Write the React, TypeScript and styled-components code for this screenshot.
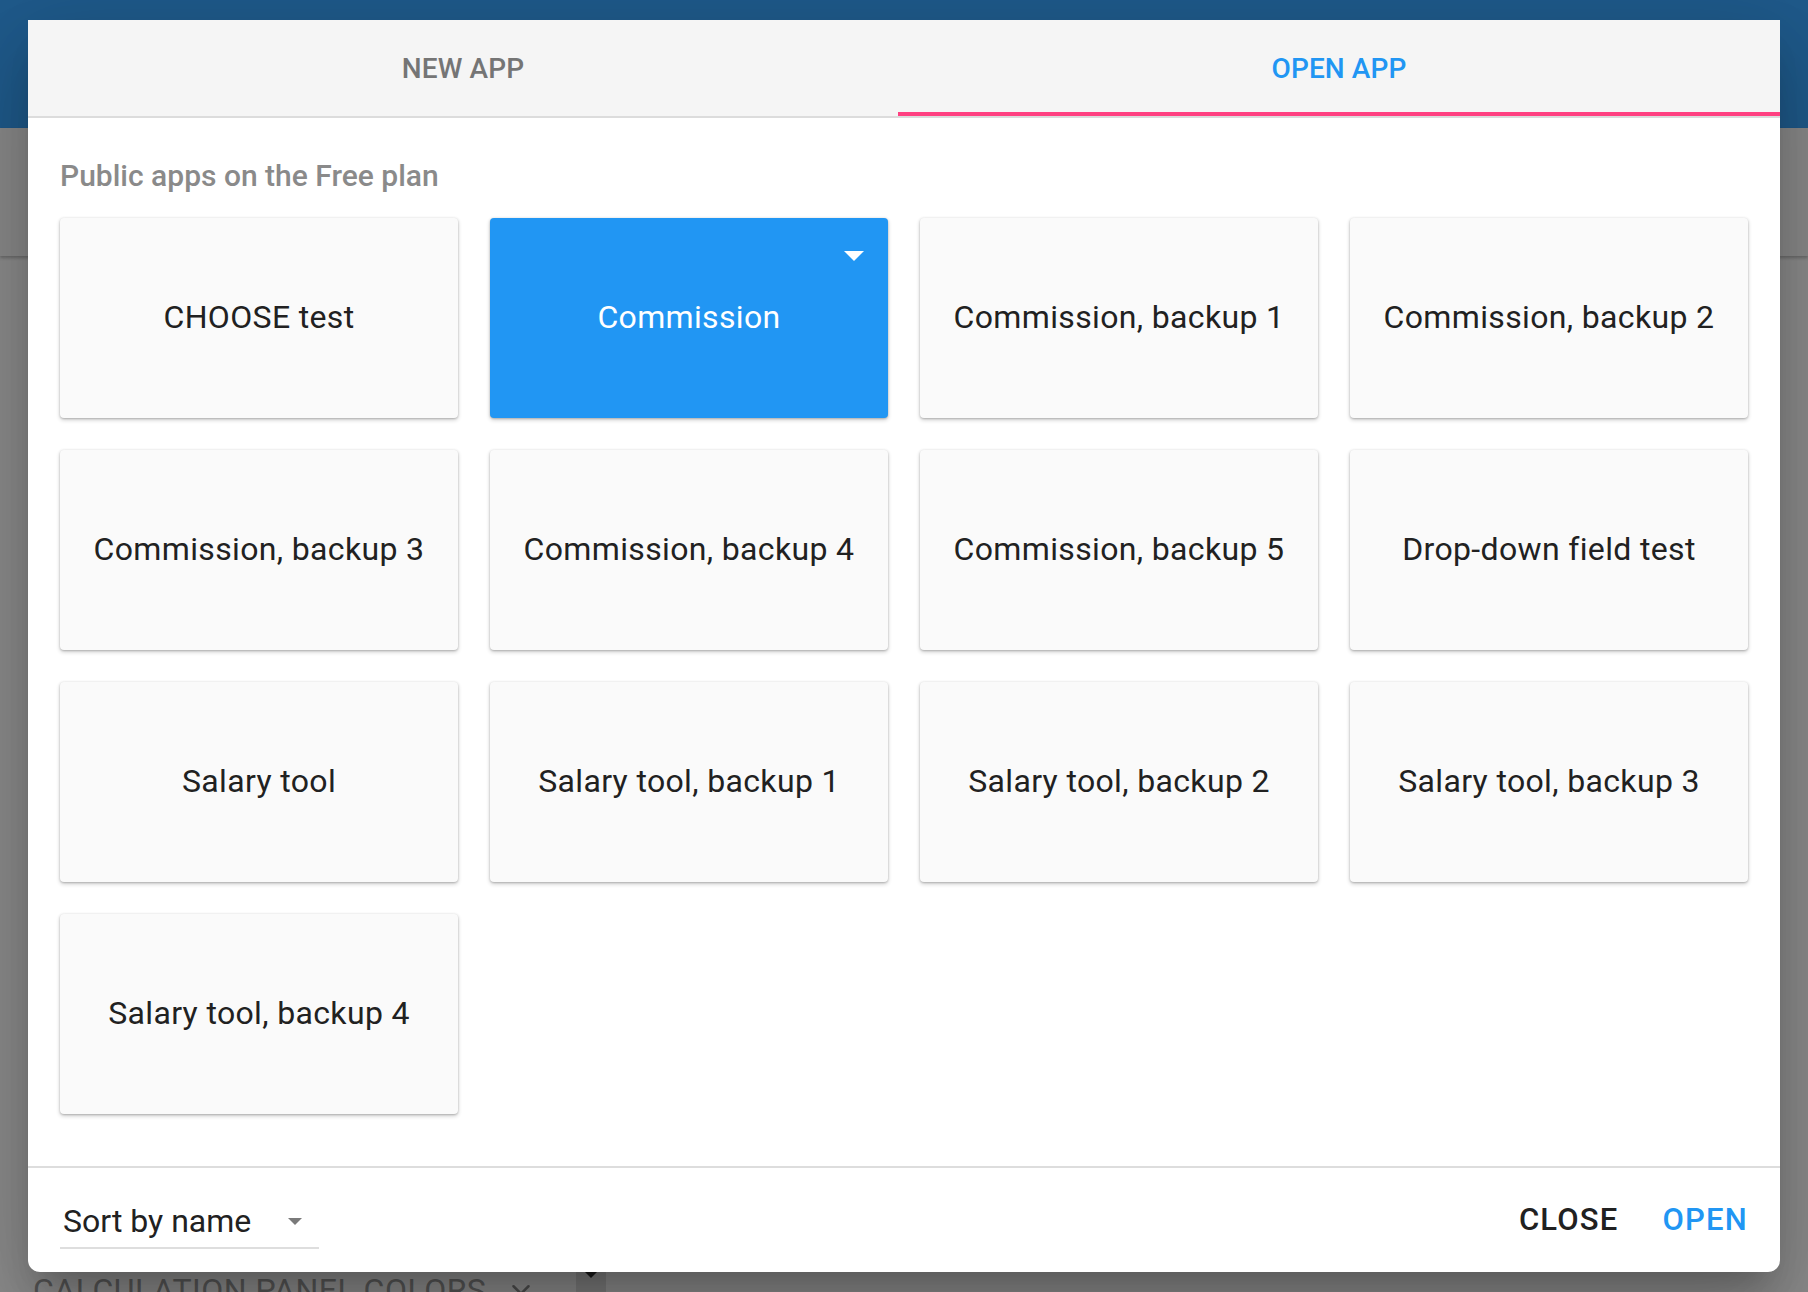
import React from 'react';
import styled, { createGlobalStyle } from 'styled-components';
import { ChevronDown } from 'lucide-react';

const GlobalStyle = createGlobalStyle`
  html, body {
    margin: 0;
    padding: 0;
  }

  body {
    font-family: Roboto, 'Noto Sans', 'Liberation Sans', sans-serif;
    overflow: hidden;
  }

  * {
    box-sizing: border-box;
  }
`;

const Page = styled.div`
  position: relative;
  width: 1808px;
  height: 1292px;
  overflow: hidden;
  display: flex;
  flex-direction: column;
  background: #8c8c8c;
`;

const AppBar = styled.div`
  height: 128px;
  flex: 0 0 128px;
  background: #1f5a8b;
`;

const SubBar = styled.div`
  height: 128px;
  flex: 0 0 128px;
  background: #8a8a8a;
  box-shadow: 0 2px 3px rgba(0, 0, 0, 0.25);
  position: relative;
  z-index: 1;
`;

const PageBody = styled.div`
  flex: 1;
  display: flex;
  align-items: flex-end;
  padding: 0 0 0 33px;
`;

const PanelTitle = styled.div`
  display: flex;
  align-items: center;
  height: 36px;
  margin-bottom: -16px;
  font-size: 32px;
  font-weight: 400;
  letter-spacing: 0.5px;
  color: #575757;
  line-height: 36px;

  svg {
    margin-left: 20px;
    color: #4e4e4e;
  }
`;

const SplitHandle = styled.div`
  align-self: stretch;
  width: 30px;
  margin-left: 40px;
  background: #7c7c7c;
  position: relative;
  margin-top: 800px;

  &::after {
    content: '';
    position: absolute;
    left: 8px;
    bottom: 14px;
    border-left: 7px solid transparent;
    border-right: 7px solid transparent;
    border-top: 7px solid #1b1b1b;
  }
`;

const Backdrop = styled.div`
  position: absolute;
  inset: 0;
  z-index: 10;
  display: flex;
  align-items: center;
  justify-content: center;
`;

const Dialog = styled.div`
  width: 1752px;
  height: 1252px;
  background: #fff;
  border-radius: 0 0 12px 12px;
  display: flex;
  flex-direction: column;
  box-shadow: 0 22px 30px -14px rgba(0, 0, 0, 0.2), 0 48px 76px 6px rgba(0, 0, 0, 0.14),
    0 18px 92px 16px rgba(0, 0, 0, 0.12);
`;

const TabBar = styled.div`
  display: flex;
  height: 98px;
  flex: 0 0 98px;
  background: #f5f5f5;
  border-bottom: 2px solid #dcdcdc;
`;

const Tab = styled.div<{ $active?: boolean; $width?: number }>`
  flex: ${(p) => (p.$width ? `0 0 ${p.$width}px` : '1')};
  display: flex;
  align-items: center;
  justify-content: center;
  font-size: 28px;
  font-weight: 500;
  letter-spacing: 0.1px;
  padding-top: 4px;
  color: ${(p) => (p.$active ? '#2196f3' : '#757575')};
  border-bottom: 4px solid ${(p) => (p.$active ? '#ff4081' : 'transparent')};
`;

const Content = styled.div`
  flex: 1;
  padding: 42px 32px 0;
`;

const SectionTitle = styled.div`
  font-size: 30px;
  line-height: 32px;
  font-weight: 500;
  color: #8a8a8a;
  margin: 0 0 26px 0;
`;

const Grid = styled.div`
  display: grid;
  grid-template-columns: repeat(4, 398px);
  grid-auto-rows: 200px;
  gap: 32px;
`;

const AppCard = styled.div<{ $selected?: boolean }>`
  position: relative;
  display: flex;
  align-items: center;
  justify-content: center;
  padding-bottom: 2px;
  border-radius: 4px;
  font-size: 32px;
  letter-spacing: 0.35px;
  background: ${(p) => (p.$selected ? '#2196f3' : '#fafafa')};
  color: ${(p) => (p.$selected ? '#ffffff' : '#212121')};
  box-shadow: 0 2px 4px rgba(0, 0, 0, 0.2), 0 1px 2px rgba(0, 0, 0, 0.14), 0 0 3px rgba(0, 0, 0, 0.08);
`;

const CardMenu = styled.span`
  position: absolute;
  top: 33px;
  right: 24px;
  width: 0;
  height: 0;
  border-left: 10px solid transparent;
  border-right: 10px solid transparent;
  border-top: 10px solid #ffffff;
`;

const Footer = styled.div`
  flex: 0 0 106px;
  height: 106px;
  border-top: 2px solid #dddddd;
  display: flex;
  align-items: center;
  justify-content: space-between;
  padding: 0 24px 2px 32px;
`;

const SortSelect = styled.div`
  width: 259px;
  height: 44px;
  margin-top: 16px;
  display: flex;
  align-items: flex-start;
  padding-left: 3px;
  border-bottom: 2px solid #dedede;
  font-size: 32px;
  line-height: 32px;
  color: #212121;

  &::after {
    content: '';
    margin: 13px 17px 0 auto;
    border-left: 7px solid transparent;
    border-right: 7px solid transparent;
    border-top: 7px solid #7a7a7a;
  }
`;

const Actions = styled.div`
  display: flex;
  gap: 28px;
`;

const TextButton = styled.button<{ $primary?: boolean }>`
  border: none;
  background: transparent;
  padding: 0 8px;
  font-family: inherit;
  font-size: 31px;
  font-weight: 500;
  letter-spacing: 1.2px;
  color: ${(p) => (p.$primary ? '#2196f3' : '#212121')};
  cursor: pointer;
`;

const apps = [
  'CHOOSE test',
  'Commission',
  'Commission, backup 1',
  'Commission, backup 2',
  'Commission, backup 3',
  'Commission, backup 4',
  'Commission, backup 5',
  'Drop-down field test',
  'Salary tool',
  'Salary tool, backup 1',
  'Salary tool, backup 2',
  'Salary tool, backup 3',
  'Salary tool, backup 4',
];

const App: React.FC = () => {
  const selected = 'Commission';

  return (
    <>
      <GlobalStyle />
      <Page>
        <AppBar />
        <SubBar />
        <PageBody>
          <PanelTitle>
            CALCULATION PANEL COLORS
            <ChevronDown size={30} strokeWidth={2} />
          </PanelTitle>
          <SplitHandle />
        </PageBody>
        <Backdrop>
          <Dialog>
            <TabBar>
              <Tab $width={870}>NEW APP</Tab>
              <Tab $active>OPEN APP</Tab>
            </TabBar>
            <Content>
              <SectionTitle>Public apps on the Free plan</SectionTitle>
              <Grid>
                {apps.map((name) => (
                  <AppCard key={name} $selected={name === selected}>
                    {name}
                    {name === selected && <CardMenu />}
                  </AppCard>
                ))}
              </Grid>
            </Content>
            <Footer>
              <SortSelect>Sort by name</SortSelect>
              <Actions>
                <TextButton>CLOSE</TextButton>
                <TextButton $primary>OPEN</TextButton>
              </Actions>
            </Footer>
          </Dialog>
        </Backdrop>
      </Page>
    </>
  );
};

export default App;
